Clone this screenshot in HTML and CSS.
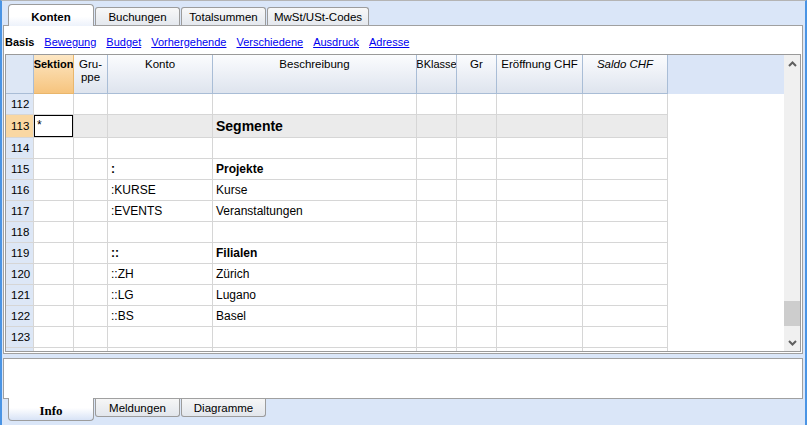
FILE: index.html
```html
<!DOCTYPE html>
<html>
<head>
<meta charset="utf-8">
<link rel="stylesheet" href="styles.css">
</head>
<body>
<div class="app">
  <div class="toptabs">
    <div class="tab active w-konten">Konten</div>
    <div class="tab w-std">Buchungen</div>
    <div class="tab w-std">Totalsummen</div>
    <div class="tab w-mwst">MwSt/USt-Codes</div>
  </div>
  <div class="panel">
    <div class="subnav">
      <b class="current">Basis</b>
      <a href="#">Bewegung</a>
      <a href="#">Budget</a>
      <a href="#">Vorhergehende</a>
      <a href="#">Verschiedene</a>
      <a href="#">Ausdruck</a>
      <a href="#">Adresse</a>
    </div>
    <div class="gridframe">
      <div class="tablewrap">
        <div class="row head">
          <div class="cell num"></div>
          <div class="cell sel">Sektion</div>
          <div class="cell">Gru-<br>ppe</div>
          <div class="cell">Konto</div>
          <div class="cell">Beschreibung</div>
          <div class="cell tight">BKlasse</div>
          <div class="cell">Gr</div>
          <div class="cell">Eröffnung CHF</div>
          <div class="cell it">Saldo CHF</div>
          <div class="cell fill"></div>
        </div>
        <div class="row"><div class="cell num">112</div><div class="cell"></div><div class="cell"></div><div class="cell"></div><div class="cell"></div><div class="cell"></div><div class="cell"></div><div class="cell"></div><div class="cell"></div><div class="cell fill"></div></div>
        <div class="row cur"><div class="cell num">113</div><div class="cell active">*</div><div class="cell"></div><div class="cell"></div><div class="cell big">Segmente</div><div class="cell"></div><div class="cell"></div><div class="cell"></div><div class="cell"></div><div class="cell fill"></div></div>
        <div class="row"><div class="cell num">114</div><div class="cell"></div><div class="cell"></div><div class="cell"></div><div class="cell"></div><div class="cell"></div><div class="cell"></div><div class="cell"></div><div class="cell"></div><div class="cell fill"></div></div>
        <div class="row"><div class="cell num">115</div><div class="cell"></div><div class="cell"></div><div class="cell bold">:</div><div class="cell bold">Projekte</div><div class="cell"></div><div class="cell"></div><div class="cell"></div><div class="cell"></div><div class="cell fill"></div></div>
        <div class="row"><div class="cell num">116</div><div class="cell"></div><div class="cell"></div><div class="cell">:KURSE</div><div class="cell">Kurse</div><div class="cell"></div><div class="cell"></div><div class="cell"></div><div class="cell"></div><div class="cell fill"></div></div>
        <div class="row"><div class="cell num">117</div><div class="cell"></div><div class="cell"></div><div class="cell">:EVENTS</div><div class="cell">Veranstaltungen</div><div class="cell"></div><div class="cell"></div><div class="cell"></div><div class="cell"></div><div class="cell fill"></div></div>
        <div class="row"><div class="cell num">118</div><div class="cell"></div><div class="cell"></div><div class="cell"></div><div class="cell"></div><div class="cell"></div><div class="cell"></div><div class="cell"></div><div class="cell"></div><div class="cell fill"></div></div>
        <div class="row"><div class="cell num">119</div><div class="cell"></div><div class="cell"></div><div class="cell bold">::</div><div class="cell bold">Filialen</div><div class="cell"></div><div class="cell"></div><div class="cell"></div><div class="cell"></div><div class="cell fill"></div></div>
        <div class="row"><div class="cell num">120</div><div class="cell"></div><div class="cell"></div><div class="cell">::ZH</div><div class="cell">Zürich</div><div class="cell"></div><div class="cell"></div><div class="cell"></div><div class="cell"></div><div class="cell fill"></div></div>
        <div class="row"><div class="cell num">121</div><div class="cell"></div><div class="cell"></div><div class="cell">::LG</div><div class="cell">Lugano</div><div class="cell"></div><div class="cell"></div><div class="cell"></div><div class="cell"></div><div class="cell fill"></div></div>
        <div class="row"><div class="cell num">122</div><div class="cell"></div><div class="cell"></div><div class="cell">::BS</div><div class="cell">Basel</div><div class="cell"></div><div class="cell"></div><div class="cell"></div><div class="cell"></div><div class="cell fill"></div></div>
        <div class="row"><div class="cell num">123</div><div class="cell"></div><div class="cell"></div><div class="cell"></div><div class="cell"></div><div class="cell"></div><div class="cell"></div><div class="cell"></div><div class="cell"></div><div class="cell fill"></div></div>
        <div class="row"><div class="cell num"></div><div class="cell"></div><div class="cell"></div><div class="cell"></div><div class="cell"></div><div class="cell"></div><div class="cell"></div><div class="cell"></div><div class="cell"></div><div class="cell fill"></div></div>
      </div>
      <div class="scrollbar">
        <div class="sbtn">
          <svg width="9" height="6" viewBox="0 0 9 6"><polyline points="1,5 4.5,1.5 8,5" fill="none" stroke="#5f5f5f" stroke-width="2"/></svg>
        </div>
        <div class="track"><div class="thumb"></div></div>
        <div class="sbtn">
          <svg width="9" height="6" viewBox="0 0 9 6"><polyline points="1,1 4.5,4.5 8,1" fill="none" stroke="#5f5f5f" stroke-width="2"/></svg>
        </div>
      </div>
    </div>
  </div>
  <div class="infopanel"></div>
  <div class="bottomtabs">
    <div class="btab active">Info</div>
    <div class="btab">Meldungen</div>
    <div class="btab">Diagramme</div>
  </div>
</div>
</body>
</html>
```

FILE: styles.css
```css
html, body {
  margin: 0;
  padding: 0;
  background: #dae6f8;
}

.app {
  width: 807px;
  height: 425px;
  box-sizing: border-box;
  background: #dae6f8;
  border-top: 1px solid #b4b4b4;
  border-left: 2px solid #4a94e4;
  border-right: 2px solid #4a94e4;
  display: flex;
  flex-direction: column;
  font-family: "Liberation Sans", Arial, sans-serif;
  color: #000;
  overflow: hidden;
}

/* top tabs */
.toptabs {
  height: 24px;
  flex: none;
  display: flex;
  align-items: flex-end;
  padding-left: 6px;
}

.tab {
  height: 18px;
  box-sizing: border-box;
  border: 1px solid #9c9c9c;
  border-bottom: none;
  border-radius: 3px 3px 0 0;
  background: linear-gradient(#f8f8f8, #e4e8ee);
  font-size: 11.5px;
  display: flex;
  align-items: center;
  justify-content: center;
  margin-right: 1px;
  padding-top: 1px;
}

.tab.active {
  height: 22px;
  margin-bottom: -1px;
  background: linear-gradient(#ffffff, #ffffff 55%, #edf2fb);
  font-weight: bold;
  font-size: 11.5px;
  position: relative;
  z-index: 1;
  border-radius: 4px 4px 0 0;
  padding-top: 2px;
}

.w-konten { width: 86px; }
.w-std { width: 85px; }
.w-mwst { width: 102px; }

/* main panel */
.panel {
  flex: none;
  margin: 0 2px 0 1px;
  height: 329px;
  box-sizing: border-box;
  border: 1px solid #a0a0a0;
  background: #fff;
  display: flex;
  flex-direction: column;
}

.subnav {
  height: 28px;
  flex: none;
  box-sizing: border-box;
  display: flex;
  align-items: center;
  padding: 3px 0 0 1px;
  gap: 10px;
  font-size: 11px;
}

.subnav .current {
  font-size: 11px;
  margin-right: 0;
}

.subnav a {
  color: #0000f0;
  text-decoration: underline;
}

.gridframe {
  height: 298px;
  flex: none;
  box-sizing: border-box;
  margin: 0 1px;
  border: 1px solid #9a9a9a;
  display: flex;
}

.tablewrap {
  flex: 1;
  overflow: hidden;
}

.row {
  display: grid;
  grid-template-columns: 28px 40px 34px 105px 204px 40px 40px 86px 85px 1fr;
  height: 21px;
}

.cell {
  box-sizing: border-box;
  border-right: 1px solid #d6d6d6;
  border-bottom: 1px solid #d6d6d6;
  padding: 0 3px;
  display: flex;
  align-items: center;
  font-size: 12px;
  white-space: nowrap;
  overflow: hidden;
}

.cell.fill {
  border: none;
}

.cell.num {
  background: #dde7f6;
  font-size: 11.5px;
  padding-left: 5px;
}

.cell.bold {
  font-weight: bold;
}

.cell.big {
  font-weight: bold;
  font-size: 14px;
}

/* header */
.row.head {
  height: 39px;
}

.head .cell {
  border-right: 1px solid #a9bdd6;
  border-bottom: 1px solid #a9bdd6;
  background: linear-gradient(#fbfcfe, #dee4ee);
  align-items: flex-start;
  justify-content: center;
  text-align: center;
  padding: 3px 0 0;
  font-size: 11.5px;
  line-height: 13px;
}

.head .cell.num {
  background: #dde7f5;
}

.head .cell.sel {
  background: linear-gradient(#fde7c4, #f6c47e);
  border-right-color: #e9b66c;
  border-bottom-color: #e9b66c;
  font-weight: bold;
  font-size: 11px;
}

.head .cell.tight {
  font-size: 11px;
}

.head .cell.it {
  font-style: italic;
}

.head .cell.fill {
  background: #dae5f7;
  border: none;
}

/* current row */
.row.cur {
  height: 23px;
}

.cur .cell {
  background: #ebebeb;
}

.cur .cell.num {
  background: #f9d7a2;
}

.cur .cell.fill {
  background: #fff;
}

.cur .cell.active {
  background: #fff;
  box-shadow: inset 0 0 0 1px #000;
  align-items: flex-start;
  padding-top: 3px;
  font-size: 12px;
}

/* scrollbar */
.scrollbar {
  width: 16px;
  flex: none;
  background: #f0f0f0;
  display: flex;
  flex-direction: column;
}

.sbtn {
  height: 17px;
  flex: none;
  display: flex;
  align-items: center;
  justify-content: center;
}

.track {
  flex: 1;
}

.thumb {
  margin-top: 229px;
  height: 25px;
  background: #cdcdcd;
}

/* info panel */
.infopanel {
  flex: none;
  margin: 4px 2px 0 1px;
  height: 41px;
  box-sizing: border-box;
  border: 1px solid #a0a0a0;
  background: #fff;
}

/* bottom tabs */
.bottomtabs {
  flex: none;
  display: flex;
  align-items: flex-start;
  padding-left: 6px;
}

.btab {
  width: 85px;
  height: 18px;
  box-sizing: border-box;
  border: 1px solid #9c9c9c;
  border-top: none;
  border-radius: 0 0 3px 3px;
  background: linear-gradient(#f6f6f6, #e2e6ec);
  font-size: 11.5px;
  display: flex;
  align-items: center;
  justify-content: center;
  margin-right: 1px;
}

.btab.active {
  width: 86px;
  height: 23px;
  margin-top: -1px;
  background: linear-gradient(#ffffff, #ffffff 45%, #d8e3f6);
  font-family: "Liberation Serif", "Times New Roman", serif;
  font-weight: bold;
  font-size: 13px;
  border-radius: 0 0 4px 4px;
  padding-top: 3px;
  position: relative;
  z-index: 1;
}
```
